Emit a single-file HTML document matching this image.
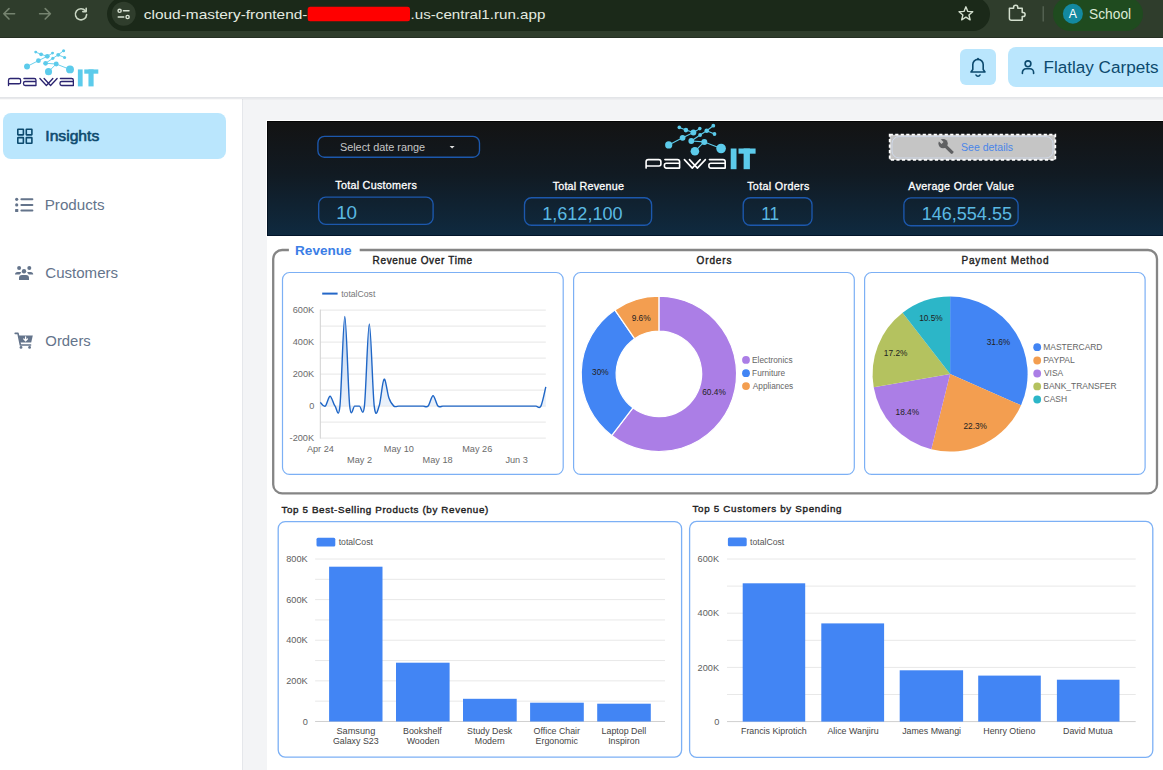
<!DOCTYPE html><html><head><meta charset="utf-8"><title>Insights</title><style>html,body{margin:0;padding:0;background:#fff;overflow:hidden}svg{display:block}text{font-family:"Liberation Sans",sans-serif}</style></head><body>
<svg width="1163" height="770" viewBox="0 0 1163 770">
<defs>
<linearGradient id="hdr" x1="0" y1="0" x2="0" y2="1"><stop offset="0" stop-color="#131313"/><stop offset="0.45" stop-color="#111a22"/><stop offset="1" stop-color="#0f2a40"/></linearGradient>
<linearGradient id="hdrl" x1="0" y1="0" x2="0" y2="1"><stop offset="0" stop-color="#040404"/><stop offset="1" stop-color="#02152a"/></linearGradient>
<linearGradient id="area" x1="0" y1="0" x2="0" y2="1"><stop offset="0" stop-color="#a9c6ee" stop-opacity="0.8"/><stop offset="1" stop-color="#e3ecf8" stop-opacity="0.6"/></linearGradient>
</defs>
<rect x="0" y="0" width="1163" height="38" fill="#2f3d2c"/><rect x="0" y="37" width="1163" height="1" fill="#263023"/>
<g fill="none" stroke="#75836f" stroke-width="1.6" stroke-linecap="round" stroke-linejoin="round"><path d="M3.8,13.8 H14.6 M9,8.6 L3.8,13.8 L9,19"/><path d="M39.6,13.8 H50.4 M45.2,8.6 L50.4,13.8 L45.2,19"/></g>
<g fill="none" stroke="#c9d6c3" stroke-width="1.6" stroke-linecap="round" stroke-linejoin="round"><path d="M85.4,10.8 A5.6,5.6 0 1 0 86.6,14.6"/><path d="M86.2,8.2 V11.6 H82.8"/></g>
<rect x="107" y="-3" width="883" height="34" rx="17" fill="#1b2919" stroke="none" stroke-width="1" />
<circle cx="123.7" cy="13.8" r="12" fill="#2f3d2c"/>
<g fill="none" stroke="#d8e2d3" stroke-width="1.4" stroke-linecap="round"><circle cx="119.6" cy="10.8" r="1.6"/><line x1="123.4" y1="10.8" x2="129" y2="10.8"/><circle cx="127.6" cy="17" r="1.6"/><line x1="118.2" y1="17" x2="123.8" y2="17"/></g>
<text x="143.85" y="18.6" font-size="12.97" fill="#e4ebe0" textLength="163.61" lengthAdjust="spacingAndGlyphs" >cloud-mastery-frontend-</text>
<rect x="307.7" y="6.7" width="102.3" height="14.5" rx="2.5" fill="#ff0000" stroke="none" stroke-width="1" />
<text x="410.63" y="18.6" font-size="12.97" fill="#e4ebe0" textLength="134.71" lengthAdjust="spacingAndGlyphs" >.us-central1.run.app</text>
<path d="M965.9,6.8 L967.78,11.41 L972.75,11.78 L968.94,14.99 L970.13,19.82 L965.9,17.2 L961.67,19.82 L962.86,14.99 L959.05,11.78 L964.02,11.41Z" fill="none" stroke="#d3dfce" stroke-width="1.4" stroke-linejoin="round"/>
<path d="M1009.4,8.2 H1013.6 V7.4 A2.1,2.1 0 0 1 1017.8,7.4 V8.2 H1022.2 V12.4 H1023 A2.1,2.1 0 0 1 1023,16.6 H1022.2 V20.2 H1011.4 A2,2 0 0 1 1009.4,18.2 Z" fill="none" stroke="#d3dfce" stroke-width="1.5" stroke-linejoin="round"/>
<line x1="1043.2" y1="6.3" x2="1043.2" y2="21.5" stroke="#5c6a5a" stroke-width="1.2" />
<rect x="1053" y="-3" width="90" height="34" rx="17" fill="#1f4b1f" stroke="none" stroke-width="1" />
<circle cx="1072.9" cy="13.8" r="10" fill="#1389a0"/>
<text x="1068.82" y="17.8" font-size="12.22" fill="#ffffff" >A</text>
<text x="1088.98" y="19.2" font-size="13.79" fill="#dcebd6" >School</text>
<rect x="0" y="38" width="1163" height="59" fill="#ffffff"/>
<rect x="0" y="97" width="1163" height="1" fill="#e3e5e8"/>
<rect x="0" y="98" width="1163" height="1" fill="#eceef0"/>
<g transform="translate(7.6,86.4) scale(0.82)"><line x1="23.7" y1="-24.3" x2="37.6" y2="-31.4" stroke="#5ccbeb" stroke-width="1.1"/><line x1="37.6" y1="-31.4" x2="48.4" y2="-36.7" stroke="#5ccbeb" stroke-width="1.1"/><line x1="48.4" y1="-36.7" x2="54.8" y2="-40.6" stroke="#5ccbeb" stroke-width="1.1"/><line x1="34.3" y1="-41.8" x2="40.9" y2="-39.1" stroke="#5ccbeb" stroke-width="1.1"/><line x1="40.9" y1="-39.1" x2="48.4" y2="-36.7" stroke="#5ccbeb" stroke-width="1.1"/><line x1="46.3" y1="-28.2" x2="55.1" y2="-34.2" stroke="#5ccbeb" stroke-width="1.1"/><line x1="55.1" y1="-34.2" x2="61.7" y2="-38.5" stroke="#5ccbeb" stroke-width="1.1"/><line x1="61.7" y1="-38.5" x2="68.3" y2="-43.5" stroke="#5ccbeb" stroke-width="1.1"/><line x1="61.7" y1="-38.5" x2="69.5" y2="-35.2" stroke="#5ccbeb" stroke-width="1.1"/><line x1="46.3" y1="-28.2" x2="59.3" y2="-27.3" stroke="#5ccbeb" stroke-width="1.1"/><line x1="59.3" y1="-27.3" x2="76.1" y2="-20.7" stroke="#5ccbeb" stroke-width="1.1"/><line x1="59.3" y1="-27.3" x2="49.9" y2="-18" stroke="#5ccbeb" stroke-width="1.1"/><circle cx="23.7" cy="-24.3" r="3.6" fill="#5ccbeb"/><circle cx="49.9" cy="-18" r="4.3" fill="#5ccbeb"/><circle cx="76.1" cy="-20.7" r="4.8" fill="#5ccbeb"/><circle cx="37.6" cy="-31.4" r="2.9" fill="#5ccbeb"/><circle cx="46.3" cy="-28.2" r="2.9" fill="#5ccbeb"/><circle cx="59.3" cy="-27.3" r="3.0" fill="#5ccbeb"/><circle cx="48.4" cy="-36.7" r="2.9" fill="#5ccbeb"/><circle cx="55.1" cy="-34.2" r="1.9" fill="#5ccbeb"/><circle cx="61.7" cy="-38.5" r="2.3" fill="#5ccbeb"/><circle cx="40.9" cy="-39.1" r="2.3" fill="#5ccbeb"/><circle cx="34.3" cy="-41.8" r="1.8" fill="#5ccbeb"/><circle cx="54.8" cy="-40.6" r="1.8" fill="#5ccbeb"/><circle cx="68.3" cy="-43.5" r="1.9" fill="#5ccbeb"/><circle cx="69.5" cy="-35.2" r="1.9" fill="#5ccbeb"/><path d="M1.1,-1.1 V-7.3999999999999995 Q1.1,-9.6 3.3000000000000003,-9.6 H13.7 Q15.899999999999999,-9.6 15.899999999999999,-7.3999999999999995 V-5.2 Q15.899999999999999,-3.2 13.899999999999999,-3.2 H1.1 M19.900000000000002,-9.6 H32.4 Q34.6,-9.6 34.6,-7.3999999999999995 V-1.1 H21.400000000000002 Q19.400000000000002,-1.1 19.400000000000002,-3.1 V-4.0 Q19.400000000000002,-6.0 21.400000000000002,-6.0 H34.6 M39.4,-9.6 L47.3,-1.1 L55.2,-9.6 M44.5,-9.6 L52.4,-1.1 L60.4,-9.6 M64.4,-9.6 H78.0 Q80.2,-9.6 80.2,-7.3999999999999995 V-1.1 H65.9 Q63.9,-1.1 63.9,-3.1 V-4.0 Q63.9,-6.0 65.9,-6.0 H80.2" fill="none" stroke="#2b2470" stroke-width="1.6" stroke-linejoin="round" stroke-linecap="round"/><rect x="85.7" y="-20.7" width="5.8" height="20.7" fill="#5ccbeb"/><rect x="93.5" y="-20.7" width="17.1" height="5.2" fill="#5ccbeb"/><rect x="98.6" y="-20.7" width="6.3" height="20.7" fill="#5ccbeb"/></g>
<rect x="960" y="49" width="36" height="36" rx="6" fill="#bae6fd" stroke="none" stroke-width="1" />
<g fill="none" stroke="#0c4a6e" stroke-width="1.6" stroke-linecap="round" stroke-linejoin="round"><path d="M971,72 H985 L983.2,69.6 V64.6 A5.2,5.2 0 0 0 972.8,64.6 V69.6 Z"/><path d="M976,75 A2.2,2.2 0 0 0 980,75"/><path d="M978,58.6 V59.4"/></g>
<rect x="1008" y="47" width="212" height="40" rx="8" fill="#bae6fd" stroke="none" stroke-width="1" />
<g fill="none" stroke="#0c4a6e" stroke-width="1.6" stroke-linecap="round"><circle cx="1028" cy="63.8" r="2.9"/><path d="M1022.4,73.4 V72.4 A3.6,3.6 0 0 1 1026,68.8 H1030 A3.6,3.6 0 0 1 1033.6,72.4 V73.4"/></g>
<text x="1043.5" y="73.3" font-size="16.97" fill="#0c4a6e" textLength="114.99" lengthAdjust="spacingAndGlyphs" >Flatlay Carpets</text>
<rect x="0" y="98" width="242" height="672" fill="#ffffff"/>
<rect x="242" y="98" width="1" height="672" fill="#e5e7eb"/>
<rect x="243" y="98" width="920" height="672" fill="#f3f4f6"/>
<rect x="0" y="98" width="1163" height="1" fill="#e8e9ec"/><rect x="0" y="99" width="1163" height="1" fill="#000" opacity="0.025"/>
<rect x="3" y="113" width="223" height="46" rx="8" fill="#bae6fd" stroke="none" stroke-width="1" />
<g fill="none" stroke="#0c4a6e" stroke-width="1.6"><rect x="17.8" y="129.3" width="5.6" height="5.6" rx="0.3"/><rect x="26.3" y="129.3" width="5.6" height="5.6" rx="0.3"/><rect x="17.8" y="137.6" width="5.6" height="5.6" rx="0.3"/><rect x="26.3" y="137.6" width="5.6" height="5.6" rx="0.3"/></g>
<text x="45.29" y="141" font-size="14.21" fill="#0c4a6e" stroke="#0c4a6e" stroke-width="0.55" textLength="54" lengthAdjust="spacingAndGlyphs" >Insights</text>
<g fill="#64748b"><circle cx="16.7" cy="199.3" r="1.6"/><circle cx="16.7" cy="204.9" r="1.6"/><rect x="15.1" y="209" width="3.2" height="3" rx="0.6"/></g>
<g stroke="#64748b" stroke-width="2" stroke-linecap="round"><line x1="21.4" y1="199.2" x2="32.4" y2="199.2"/><line x1="21.4" y1="204.9" x2="32.4" y2="204.9"/><line x1="21.4" y1="210.6" x2="32.4" y2="210.6"/></g>
<text x="44.76" y="209.8" font-size="13.79" fill="#64748b" textLength="59.91" lengthAdjust="spacingAndGlyphs" >Products</text>
<g fill="#64748b"><circle cx="19.1" cy="267.9" r="2"/><circle cx="29.3" cy="267.9" r="2"/><circle cx="24" cy="271.3" r="2.2"/><path d="M15,274.6 Q15,272 17.6,272 H20.4 Q21,272 21.4,272.4 L19.6,274.6 Z"/><path d="M33.2,274.6 Q33.2,272 30.6,272 H28 Q27.4,272 27,272.4 L28.8,274.6 Z"/><path d="M19,280 V278 Q19,275 22,275 H26 Q29,275 29,278 V280 Z"/></g>
<text x="45.28" y="277.7" font-size="14.34" fill="#64748b" textLength="72.81" lengthAdjust="spacingAndGlyphs" >Customers</text>
<path d="M15.2,333.4 H18 L20.4,345 H30.6" fill="none" stroke="#64748b" stroke-width="1.6" stroke-linecap="round" stroke-linejoin="round"/>
<path d="M18.6,335.4 H32.8 L31.2,342.6 H20 Z" fill="#64748b"/>
<path d="M25.6,336.8 V340.6 M23.8,339 L25.6,340.8 L27.4,339" fill="none" stroke="#ffffff" stroke-width="1.2" stroke-linecap="round"/>
<circle cx="21" cy="347.4" r="1.4" fill="#64748b"/><circle cx="29.6" cy="347.4" r="1.4" fill="#64748b"/>
<text x="45.34" y="345.7" font-size="13.79" fill="#64748b" textLength="45.45" lengthAdjust="spacingAndGlyphs" >Orders</text>
<rect x="267" y="120" width="896" height="650" fill="#ffffff"/>
<rect x="266" y="120" width="1" height="117" fill="#ffffff"/>
<rect x="267" y="121" width="896" height="115" fill="url(#hdr)"/>
<rect x="267" y="121" width="896" height="1" fill="#050505"/>
<rect x="267" y="235" width="896" height="1" fill="#02152a"/>
<rect x="267" y="121" width="1" height="115" fill="url(#hdrl)"/>
<rect x="317.9" y="136.4" width="161.6" height="20.9" rx="6.5" fill="none" stroke="#1c58ad" stroke-width="1.35" />
<text x="339.92" y="151.3" font-size="10.62" fill="#c6c6c6" textLength="85.25" lengthAdjust="spacingAndGlyphs" >Select date range</text>
<path d="M449.6,146 H454.6 L452.1,148.6 Z" fill="#dddddd"/>
<rect x="889.7" y="134.7" width="165.6" height="25.2" rx="0" fill="#c5c5c5" stroke="#ffffff" stroke-width="1.8" stroke-dasharray="3.2,2.3"/>
<rect x="892" y="136.6" width="161" height="21.4" rx="7" fill="none" stroke="#d0dcf0" stroke-width="0.8" />
<g transform="rotate(-45 947.9 148.4)"><rect x="946.25" y="142" width="3.3" height="13.4" rx="1.3" fill="#5f6062"/><circle cx="947.9" cy="141.6" r="4.7" fill="#5f6062"/><rect x="946.5" y="135.4" width="2.8" height="5.4" fill="#c5c5c5"/></g>
<text x="961.02" y="150.8" font-size="10.76" fill="#4a86e8" textLength="52.07" lengthAdjust="spacingAndGlyphs" >See details</text>
<text x="335.26" y="189.1" font-size="10.76" fill="#ffffff" stroke="#ffffff" stroke-width="0.3" textLength="81.52" lengthAdjust="spacing" >Total Customers</text>
<text x="552.66" y="190.1" font-size="10.76" fill="#ffffff" stroke="#ffffff" stroke-width="0.3" textLength="71.21" lengthAdjust="spacing" >Total Revenue</text>
<text x="747.16" y="190" font-size="10.76" fill="#ffffff" stroke="#ffffff" stroke-width="0.3" textLength="62.11" lengthAdjust="spacing" >Total Orders</text>
<text x="908.37" y="190" font-size="10.76" fill="#ffffff" stroke="#ffffff" stroke-width="0.3" textLength="105.51" lengthAdjust="spacing" >Average Order Value</text>
<rect x="318.7" y="197.1" width="114.4" height="27.3" rx="7" fill="none" stroke="#1c58ad" stroke-width="1.35" />
<rect x="524.5" y="197.7" width="127.1" height="27.5" rx="7" fill="none" stroke="#1c58ad" stroke-width="1.35" />
<rect x="743.2" y="197.7" width="68.8" height="27.5" rx="7" fill="none" stroke="#1c58ad" stroke-width="1.35" />
<rect x="903.9" y="197.9" width="114.2" height="27.9" rx="7" fill="none" stroke="#1c58ad" stroke-width="1.35" />
<text x="336.15" y="219.2" font-size="18.06" fill="#5bb9e2" textLength="20.97" lengthAdjust="spacingAndGlyphs" >10</text>
<text x="542.25" y="220" font-size="18.06" fill="#5bb9e2" >1,612,100</text>
<text x="761.23" y="220" font-size="18.33" fill="#5bb9e2" textLength="17.96" lengthAdjust="spacingAndGlyphs" >11</text>
<text x="921.65" y="219.6" font-size="18.06" fill="#5bb9e2" >146,554.55</text>
<g transform="translate(645,169.2) scale(1)"><line x1="23.7" y1="-24.3" x2="37.6" y2="-31.4" stroke="#5ccbeb" stroke-width="1.1"/><line x1="37.6" y1="-31.4" x2="48.4" y2="-36.7" stroke="#5ccbeb" stroke-width="1.1"/><line x1="48.4" y1="-36.7" x2="54.8" y2="-40.6" stroke="#5ccbeb" stroke-width="1.1"/><line x1="34.3" y1="-41.8" x2="40.9" y2="-39.1" stroke="#5ccbeb" stroke-width="1.1"/><line x1="40.9" y1="-39.1" x2="48.4" y2="-36.7" stroke="#5ccbeb" stroke-width="1.1"/><line x1="46.3" y1="-28.2" x2="55.1" y2="-34.2" stroke="#5ccbeb" stroke-width="1.1"/><line x1="55.1" y1="-34.2" x2="61.7" y2="-38.5" stroke="#5ccbeb" stroke-width="1.1"/><line x1="61.7" y1="-38.5" x2="68.3" y2="-43.5" stroke="#5ccbeb" stroke-width="1.1"/><line x1="61.7" y1="-38.5" x2="69.5" y2="-35.2" stroke="#5ccbeb" stroke-width="1.1"/><line x1="46.3" y1="-28.2" x2="59.3" y2="-27.3" stroke="#5ccbeb" stroke-width="1.1"/><line x1="59.3" y1="-27.3" x2="76.1" y2="-20.7" stroke="#5ccbeb" stroke-width="1.1"/><line x1="59.3" y1="-27.3" x2="49.9" y2="-18" stroke="#5ccbeb" stroke-width="1.1"/><circle cx="23.7" cy="-24.3" r="3.6" fill="#5ccbeb"/><circle cx="49.9" cy="-18" r="4.3" fill="#5ccbeb"/><circle cx="76.1" cy="-20.7" r="4.8" fill="#5ccbeb"/><circle cx="37.6" cy="-31.4" r="2.9" fill="#5ccbeb"/><circle cx="46.3" cy="-28.2" r="2.9" fill="#5ccbeb"/><circle cx="59.3" cy="-27.3" r="3.0" fill="#5ccbeb"/><circle cx="48.4" cy="-36.7" r="2.9" fill="#5ccbeb"/><circle cx="55.1" cy="-34.2" r="1.9" fill="#5ccbeb"/><circle cx="61.7" cy="-38.5" r="2.3" fill="#5ccbeb"/><circle cx="40.9" cy="-39.1" r="2.3" fill="#5ccbeb"/><circle cx="34.3" cy="-41.8" r="1.8" fill="#5ccbeb"/><circle cx="54.8" cy="-40.6" r="1.8" fill="#5ccbeb"/><circle cx="68.3" cy="-43.5" r="1.9" fill="#5ccbeb"/><circle cx="69.5" cy="-35.2" r="1.9" fill="#5ccbeb"/><path d="M1.1,-1.1 V-7.3999999999999995 Q1.1,-9.6 3.3000000000000003,-9.6 H13.7 Q15.899999999999999,-9.6 15.899999999999999,-7.3999999999999995 V-5.2 Q15.899999999999999,-3.2 13.899999999999999,-3.2 H1.1 M19.900000000000002,-9.6 H32.4 Q34.6,-9.6 34.6,-7.3999999999999995 V-1.1 H21.400000000000002 Q19.400000000000002,-1.1 19.400000000000002,-3.1 V-4.0 Q19.400000000000002,-6.0 21.400000000000002,-6.0 H34.6 M39.4,-9.6 L47.3,-1.1 L55.2,-9.6 M44.5,-9.6 L52.4,-1.1 L60.4,-9.6 M64.4,-9.6 H78.0 Q80.2,-9.6 80.2,-7.3999999999999995 V-1.1 H65.9 Q63.9,-1.1 63.9,-3.1 V-4.0 Q63.9,-6.0 65.9,-6.0 H80.2" fill="none" stroke="#ffffff" stroke-width="1.6" stroke-linejoin="round" stroke-linecap="round"/><rect x="85.7" y="-20.7" width="5.8" height="20.7" fill="#5ccbeb"/><rect x="93.5" y="-20.7" width="17.1" height="5.2" fill="#5ccbeb"/><rect x="98.6" y="-20.7" width="6.3" height="20.7" fill="#5ccbeb"/></g>
<path d="M288.9,250.0 H282.2 A9,9 0 0 0 273.2,259.0 V484.4 A9,9 0 0 0 282.2,493.4 H1148.0 A9,9 0 0 0 1157.0,484.4 V259.0 A9,9 0 0 0 1148.0,250.0 H359.7" fill="none" stroke="#858585" stroke-width="2.3"/>
<text x="295.05" y="254.7" font-size="12.65" fill="#3b7ee6" font-weight="bold" textLength="56.58" lengthAdjust="spacingAndGlyphs" >Revenue</text>
<text x="372.57" y="263.7" font-size="10" fill="#1f1f1f" stroke="#1f1f1f" stroke-width="0.4" textLength="99.55" lengthAdjust="spacing" >Revenue Over Time</text>
<text x="696.52" y="263.9" font-size="10" fill="#1f1f1f" stroke="#1f1f1f" stroke-width="0.4" textLength="34.94" lengthAdjust="spacing" >Orders</text>
<text x="961.38" y="263.9" font-size="10" fill="#1f1f1f" stroke="#1f1f1f" stroke-width="0.4" textLength="87.07" lengthAdjust="spacing" >Payment Method</text>
<rect x="282.5" y="272.5" width="280.7" height="201.9" rx="7" fill="#ffffff" stroke="#7cb0f5" stroke-width="1.2" />
<rect x="573.6" y="272.5" width="280.7" height="201.9" rx="7" fill="#ffffff" stroke="#7cb0f5" stroke-width="1.2" />
<rect x="864.6" y="272.5" width="280.5" height="201.9" rx="7" fill="#ffffff" stroke="#7cb0f5" stroke-width="1.2" />
<line x1="320.3" y1="310.1" x2="545.8" y2="310.1" stroke="#e6e6e6" stroke-width="1" />
<line x1="320.3" y1="326.1" x2="545.8" y2="326.1" stroke="#e6e6e6" stroke-width="1" />
<line x1="320.3" y1="342.1" x2="545.8" y2="342.1" stroke="#e6e6e6" stroke-width="1" />
<line x1="320.3" y1="358.1" x2="545.8" y2="358.1" stroke="#e6e6e6" stroke-width="1" />
<line x1="320.3" y1="374.1" x2="545.8" y2="374.1" stroke="#e6e6e6" stroke-width="1" />
<line x1="320.3" y1="390.1" x2="545.8" y2="390.1" stroke="#e6e6e6" stroke-width="1" />
<line x1="320.3" y1="406.1" x2="545.8" y2="406.1" stroke="#e6e6e6" stroke-width="1" />
<line x1="320.3" y1="422.1" x2="545.8" y2="422.1" stroke="#e6e6e6" stroke-width="1" />
<line x1="320.3" y1="438.1" x2="545.8" y2="438.1" stroke="#e6e6e6" stroke-width="1" />
<line x1="320.3" y1="309.6" x2="320.3" y2="438.6" stroke="#d0d0d0" stroke-width="1" />
<text x="292.69" y="313.3" font-size="9.18" fill="#6b6b6b" >600K</text>
<text x="292.69" y="345.3" font-size="9.18" fill="#6b6b6b" >400K</text>
<text x="292.69" y="377.3" font-size="9.18" fill="#6b6b6b" >200K</text>
<text x="309.25" y="409.3" font-size="9.18" fill="#6b6b6b" >0</text>
<text x="289.62" y="441.3" font-size="9.18" fill="#6b6b6b" >-200K</text>
<text x="306.9" y="451.6" font-size="9.18" fill="#6b6b6b" >Apr 24</text>
<text x="383.76" y="451.6" font-size="9.18" fill="#6b6b6b" >May 10</text>
<text x="462.18" y="451.6" font-size="9.18" fill="#6b6b6b" >May 26</text>
<text x="347.06" y="463.4" font-size="9.18" fill="#6b6b6b" >May 2</text>
<text x="422.58" y="463.4" font-size="9.18" fill="#6b6b6b" >May 18</text>
<text x="505.41" y="463.4" font-size="9.18" fill="#6b6b6b" >Jun 3</text>
<line x1="322.2" y1="293.6" x2="337.6" y2="293.6" stroke="#2467c8" stroke-width="2" />
<text x="341.17" y="296.6" font-size="8.41" fill="#777777" textLength="34.2" lengthAdjust="spacingAndGlyphs" >totalCost</text>
<path d="M320.3,402.42 C321.12,403.03 323.57,407.14 325.2,406.1 C326.84,405.06 328.47,396.18 330.1,396.18 C331.74,396.18 333.37,404.45 335.01,406.1 C336.64,407.75 338.27,421.03 339.91,406.1 C341.54,391.17 343.18,316.5 344.81,316.5 C346.44,316.5 348.08,391.17 349.71,406.1 C351.35,421.03 352.98,406.1 354.62,406.1 C356.25,406.1 357.88,406.1 359.52,406.1 C361.15,406.1 362.79,419.81 364.42,406.1 C366.05,392.39 367.69,323.86 369.32,323.86 C370.96,323.86 372.59,392.39 374.22,406.1 C375.86,419.81 377.49,410.58 379.13,406.1 C380.76,401.62 382.39,380.55 384.03,379.22 C385.66,377.89 387.3,393.62 388.93,398.1 C390.56,402.58 392.2,404.77 393.83,406.1 C395.47,407.43 397.1,406.1 398.73,406.1 C400.37,406.1 402,406.1 403.64,406.1 C405.27,406.1 406.91,406.1 408.54,406.1 C410.17,406.1 411.81,406.1 413.44,406.1 C415.08,406.1 416.71,406.1 418.34,406.1 C419.98,406.1 421.61,406.1 423.25,406.1 C424.88,406.1 426.51,407.83 428.15,406.1 C429.78,404.37 431.42,395.7 433.05,395.7 C434.68,395.7 436.32,404.37 437.95,406.1 C439.59,407.83 441.22,406.1 442.85,406.1 C444.49,406.1 446.12,406.1 447.76,406.1 C449.39,406.1 451.02,406.1 452.66,406.1 C454.29,406.1 455.93,406.1 457.56,406.1 C459.19,406.1 460.83,406.1 462.46,406.1 C464.1,406.1 465.73,406.1 467.37,406.1 C469,406.1 470.63,406.1 472.27,406.1 C473.9,406.1 475.54,406.1 477.17,406.1 C478.8,406.1 480.44,406.1 482.07,406.1 C483.71,406.1 485.34,406.1 486.97,406.1 C488.61,406.1 490.24,406.1 491.88,406.1 C493.51,406.1 495.14,406.1 496.78,406.1 C498.41,406.1 500.05,406.1 501.68,406.1 C503.31,406.1 504.95,406.1 506.58,406.1 C508.22,406.1 509.85,406.1 511.48,406.1 C513.12,406.1 514.75,406.1 516.39,406.1 C518.02,406.1 519.66,406.1 521.29,406.1 C522.92,406.1 524.56,406.1 526.19,406.1 C527.83,406.1 529.46,406.1 531.09,406.1 C532.73,406.1 534.36,406.1 536,406.1 C537.63,406.1 539.26,409.3 540.9,406.1 C542.53,402.9 544.98,390.1 545.8,386.9 L545.8,406.1 L320.3,406.1 Z" fill="url(#area)"/>
<path d="M320.3,402.42 C321.12,403.03 323.57,407.14 325.2,406.1 C326.84,405.06 328.47,396.18 330.1,396.18 C331.74,396.18 333.37,404.45 335.01,406.1 C336.64,407.75 338.27,421.03 339.91,406.1 C341.54,391.17 343.18,316.5 344.81,316.5 C346.44,316.5 348.08,391.17 349.71,406.1 C351.35,421.03 352.98,406.1 354.62,406.1 C356.25,406.1 357.88,406.1 359.52,406.1 C361.15,406.1 362.79,419.81 364.42,406.1 C366.05,392.39 367.69,323.86 369.32,323.86 C370.96,323.86 372.59,392.39 374.22,406.1 C375.86,419.81 377.49,410.58 379.13,406.1 C380.76,401.62 382.39,380.55 384.03,379.22 C385.66,377.89 387.3,393.62 388.93,398.1 C390.56,402.58 392.2,404.77 393.83,406.1 C395.47,407.43 397.1,406.1 398.73,406.1 C400.37,406.1 402,406.1 403.64,406.1 C405.27,406.1 406.91,406.1 408.54,406.1 C410.17,406.1 411.81,406.1 413.44,406.1 C415.08,406.1 416.71,406.1 418.34,406.1 C419.98,406.1 421.61,406.1 423.25,406.1 C424.88,406.1 426.51,407.83 428.15,406.1 C429.78,404.37 431.42,395.7 433.05,395.7 C434.68,395.7 436.32,404.37 437.95,406.1 C439.59,407.83 441.22,406.1 442.85,406.1 C444.49,406.1 446.12,406.1 447.76,406.1 C449.39,406.1 451.02,406.1 452.66,406.1 C454.29,406.1 455.93,406.1 457.56,406.1 C459.19,406.1 460.83,406.1 462.46,406.1 C464.1,406.1 465.73,406.1 467.37,406.1 C469,406.1 470.63,406.1 472.27,406.1 C473.9,406.1 475.54,406.1 477.17,406.1 C478.8,406.1 480.44,406.1 482.07,406.1 C483.71,406.1 485.34,406.1 486.97,406.1 C488.61,406.1 490.24,406.1 491.88,406.1 C493.51,406.1 495.14,406.1 496.78,406.1 C498.41,406.1 500.05,406.1 501.68,406.1 C503.31,406.1 504.95,406.1 506.58,406.1 C508.22,406.1 509.85,406.1 511.48,406.1 C513.12,406.1 514.75,406.1 516.39,406.1 C518.02,406.1 519.66,406.1 521.29,406.1 C522.92,406.1 524.56,406.1 526.19,406.1 C527.83,406.1 529.46,406.1 531.09,406.1 C532.73,406.1 534.36,406.1 536,406.1 C537.63,406.1 539.26,409.3 540.9,406.1 C542.53,402.9 544.98,390.1 545.8,386.9" fill="none" stroke="#1f66c6" stroke-width="1.4" stroke-linejoin="round"/>
<path d="M658.9,296.2 A77.7,77.7 0 1 1 611.66,435.59 L632.88,407.88 A42.8,42.8 0 1 0 658.9,331.1 Z" fill="#ab7ee6" stroke="#ffffff" stroke-width="1.2" stroke-linejoin="round"/>
<path d="M611.66,435.59 A77.7,77.7 0 0 1 614.82,309.91 L634.62,338.65 A42.8,42.8 0 0 0 632.88,407.88 Z" fill="#4285f4" stroke="#ffffff" stroke-width="1.2" stroke-linejoin="round"/>
<path d="M614.82,309.91 A77.7,77.7 0 0 1 658.9,296.2 L658.9,331.1 A42.8,42.8 0 0 0 634.62,338.65 Z" fill="#f39e50" stroke="#ffffff" stroke-width="1.2" stroke-linejoin="round"/>
<text x="631.67" y="321.2" font-size="8.32" fill="#222222" >9.6%</text>
<text x="592.06" y="375" font-size="8.32" fill="#222222" >30%</text>
<text x="702.24" y="394.9" font-size="8.32" fill="#222222" >60.4%</text>
<circle cx="746" cy="359.9" r="3.9" fill="#ab7ee6"/>
<text x="752.12" y="362.9" font-size="8.28" fill="#666666" >Electronics</text>
<circle cx="746" cy="373.2" r="3.9" fill="#4285f4"/>
<text x="752.12" y="376.2" font-size="8.28" fill="#666666" >Furniture</text>
<circle cx="746" cy="386.1" r="3.9" fill="#f39e50"/>
<text x="752.78" y="389.1" font-size="8.28" fill="#666666" >Appliances</text>
<path d="M950.1,374.1 L950.1,296.6 A77.5,77.5 0 0 1 1021.03,405.33 Z" fill="#4285f4"/>
<path d="M950.1,374.1 L1021.03,405.33 A77.5,77.5 0 0 1 931.3,449.28 Z" fill="#f39e50"/>
<path d="M950.1,374.1 L931.3,449.28 A77.5,77.5 0 0 1 873.71,387.18 Z" fill="#ab7ee6"/>
<path d="M950.1,374.1 L873.71,387.18 A77.5,77.5 0 0 1 902.6,312.86 Z" fill="#b4c25f"/>
<path d="M950.1,374.1 L902.6,312.86 A77.5,77.5 0 0 1 950.1,296.6 Z" fill="#2cb6c8"/>
<text x="986.69" y="344.8" font-size="8.32" fill="#222222" >31.6%</text>
<text x="963.44" y="428.7" font-size="8.32" fill="#222222" >22.3%</text>
<text x="895.54" y="415.4" font-size="8.32" fill="#222222" >18.4%</text>
<text x="883.84" y="355.8" font-size="8.32" fill="#222222" >17.2%</text>
<text x="919.14" y="321.2" font-size="8.32" fill="#222222" >10.5%</text>
<circle cx="1037.2" cy="347.2" r="3.9" fill="#4285f4"/>
<text x="1043.3" y="350.1" font-size="8.46" fill="#666666" >MASTERCARD</text>
<circle cx="1037.2" cy="360.5" r="3.9" fill="#f39e50"/>
<text x="1043.29" y="363.4" font-size="8.58" fill="#666666" >PAYPAL</text>
<circle cx="1037.2" cy="373.5" r="3.9" fill="#ab7ee6"/>
<text x="1043.96" y="376.4" font-size="8.46" fill="#666666" >VISA</text>
<circle cx="1037.2" cy="386.4" r="3.9" fill="#b4c25f"/>
<text x="1043.3" y="389.3" font-size="8.46" fill="#666666" >BANK_TRANSFER</text>
<circle cx="1037.2" cy="399.5" r="3.9" fill="#2cb6c8"/>
<text x="1043.58" y="402.4" font-size="8.46" fill="#666666" >CASH</text>
<text x="281.38" y="512.5" font-size="9.8" fill="#1f1f1f" stroke="#1f1f1f" stroke-width="0.4" textLength="206.91" lengthAdjust="spacing" >Top 5 Best-Selling Products (by Revenue)</text>
<text x="692.48" y="512.4" font-size="9.8" fill="#1f1f1f" stroke="#1f1f1f" stroke-width="0.4" textLength="149.05" lengthAdjust="spacing" >Top 5 Customers by Spending</text>
<rect x="278.2" y="521.6" width="403.4" height="235.5" rx="7" fill="#ffffff" stroke="#7cb0f5" stroke-width="1.3" />
<rect x="689.6" y="521.4" width="463.2" height="235.9" rx="7" fill="#ffffff" stroke="#7cb0f5" stroke-width="1.3" />
<rect x="316.5" y="537.8" width="18.8" height="8.7" rx="1.5" fill="#4285f4" stroke="none" stroke-width="1" />
<text x="338.67" y="545.4" font-size="8.69" fill="#555555" >totalCost</text>
<line x1="315.1" y1="559" x2="665" y2="559" stroke="#e8e8e8" stroke-width="1" />
<line x1="315.1" y1="579.31" x2="665" y2="579.31" stroke="#e8e8e8" stroke-width="1" />
<line x1="315.1" y1="599.62" x2="665" y2="599.62" stroke="#e8e8e8" stroke-width="1" />
<line x1="315.1" y1="619.93" x2="665" y2="619.93" stroke="#e8e8e8" stroke-width="1" />
<line x1="315.1" y1="640.24" x2="665" y2="640.24" stroke="#e8e8e8" stroke-width="1" />
<line x1="315.1" y1="660.55" x2="665" y2="660.55" stroke="#e8e8e8" stroke-width="1" />
<line x1="315.1" y1="680.86" x2="665" y2="680.86" stroke="#e8e8e8" stroke-width="1" />
<line x1="315.1" y1="701.17" x2="665" y2="701.17" stroke="#e8e8e8" stroke-width="1" />
<line x1="315.1" y1="721.48" x2="665" y2="721.48" stroke="#cfcfcf" stroke-width="1" />
<text x="286.19" y="562.2" font-size="9.18" fill="#5e5e5e" >800K</text>
<text x="286.19" y="602.82" font-size="9.18" fill="#5e5e5e" >600K</text>
<text x="286.19" y="643.44" font-size="9.18" fill="#5e5e5e" >400K</text>
<text x="286.19" y="684.06" font-size="9.18" fill="#5e5e5e" >200K</text>
<text x="302.75" y="724.68" font-size="9.18" fill="#5e5e5e" >0</text>
<rect x="329.1" y="566.7" width="53.4" height="154.78" fill="#4285f4"/>
<text x="336.51" y="734.28" font-size="9.18" fill="#444444" >Samsung</text>
<text x="332.96" y="744.08" font-size="8.83" fill="#444444" >Galaxy S23</text>
<rect x="396" y="662.7" width="53.6" height="58.78" fill="#4285f4"/>
<text x="403.04" y="734.28" font-size="8.83" fill="#444444" >Bookshelf</text>
<text x="406.7" y="744.08" font-size="8.83" fill="#444444" >Wooden</text>
<rect x="463" y="698.8" width="53.7" height="22.68" fill="#4285f4"/>
<text x="467.09" y="734.28" font-size="8.83" fill="#444444" >Study Desk</text>
<text x="474.8" y="744.08" font-size="8.83" fill="#444444" >Modern</text>
<rect x="530.1" y="702.7" width="53.7" height="18.78" fill="#4285f4"/>
<text x="533.59" y="734.28" font-size="8.83" fill="#444444" >Office Chair</text>
<text x="535.61" y="744.08" font-size="8.83" fill="#444444" >Ergonomic</text>
<rect x="597.2" y="703.7" width="53.6" height="17.78" fill="#4285f4"/>
<text x="601.6" y="734.28" font-size="8.83" fill="#444444" >Laptop Dell</text>
<text x="608.17" y="744.08" font-size="8.83" fill="#444444" >Inspiron</text>
<rect x="727.9" y="537.6" width="18.8" height="8.7" rx="1.5" fill="#4285f4" stroke="none" stroke-width="1" />
<text x="750.07" y="545.2" font-size="8.69" fill="#555555" >totalCost</text>
<line x1="727" y1="559" x2="1135.7" y2="559" stroke="#e8e8e8" stroke-width="1" />
<line x1="727" y1="586.1" x2="1135.7" y2="586.1" stroke="#e8e8e8" stroke-width="1" />
<line x1="727" y1="613.2" x2="1135.7" y2="613.2" stroke="#e8e8e8" stroke-width="1" />
<line x1="727" y1="640.3" x2="1135.7" y2="640.3" stroke="#e8e8e8" stroke-width="1" />
<line x1="727" y1="667.4" x2="1135.7" y2="667.4" stroke="#e8e8e8" stroke-width="1" />
<line x1="727" y1="694.5" x2="1135.7" y2="694.5" stroke="#e8e8e8" stroke-width="1" />
<line x1="727" y1="721.6" x2="1135.7" y2="721.6" stroke="#cfcfcf" stroke-width="1" />
<text x="697.59" y="562.2" font-size="9.18" fill="#5e5e5e" >600K</text>
<text x="697.59" y="616.4" font-size="9.18" fill="#5e5e5e" >400K</text>
<text x="697.59" y="670.6" font-size="9.18" fill="#5e5e5e" >200K</text>
<text x="714.15" y="724.8" font-size="9.18" fill="#5e5e5e" >0</text>
<rect x="742.7" y="583.3" width="62.5" height="138.3" fill="#4285f4"/>
<text x="741" y="734.4" font-size="8.83" fill="#444444" >Francis Kiprotich</text>
<rect x="821.3" y="623.4" width="62.8" height="98.2" fill="#4285f4"/>
<text x="827.39" y="734.4" font-size="8.83" fill="#444444" >Alice Wanjiru</text>
<rect x="899.7" y="670.3" width="63.4" height="51.3" fill="#4285f4"/>
<text x="902.19" y="734.4" font-size="8.83" fill="#444444" >James Mwangi</text>
<rect x="978.2" y="675.6" width="62.6" height="46" fill="#4285f4"/>
<text x="983.32" y="734.4" font-size="8.83" fill="#444444" >Henry Otieno</text>
<rect x="1056.9" y="679.7" width="62.6" height="41.9" fill="#4285f4"/>
<text x="1063.05" y="734.4" font-size="8.83" fill="#444444" >David Mutua</text>
</svg></body></html>
